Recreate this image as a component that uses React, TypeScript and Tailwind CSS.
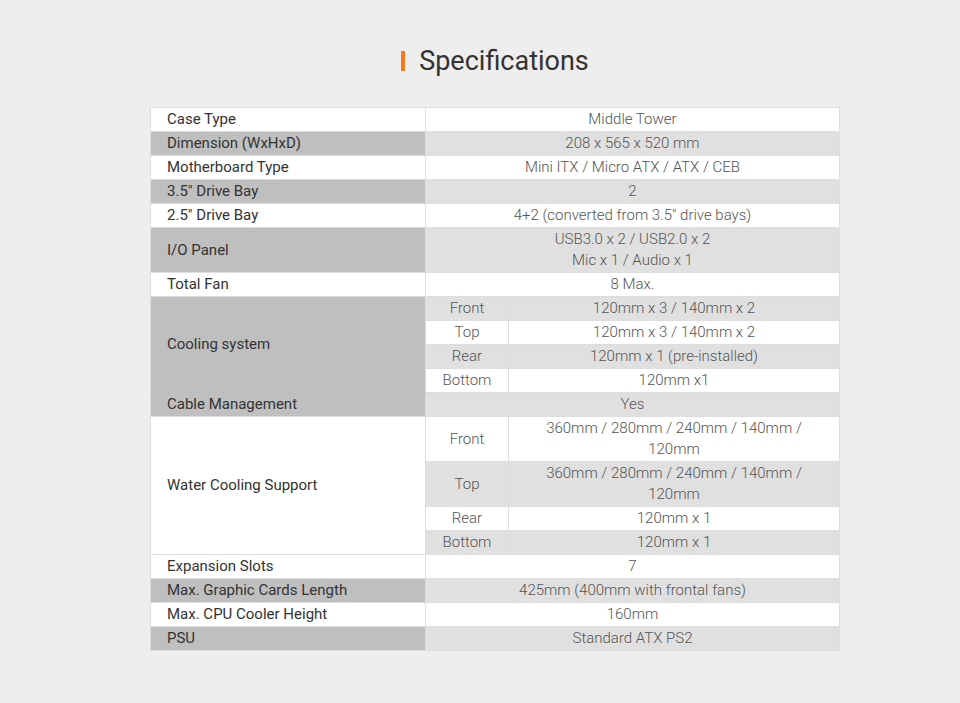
import React from 'react';

type Row = {
  label?: string;
  labelSpan?: number;
  sub?: string;
  value: string[];
  joinBelow?: boolean;
  joinAbove?: boolean;
};

const rows: Row[] = [
  { label: 'Case Type', value: ['Middle Tower'] },
  { label: 'Dimension (WxHxD)', value: ['208 x 565 x 520 mm'] },
  { label: 'Motherboard Type', value: ['Mini ITX / Micro ATX / ATX / CEB'] },
  { label: '3.5" Drive Bay', value: ['2'] },
  { label: '2.5" Drive Bay', value: ['4+2 (converted from 3.5" drive bays)'] },
  { label: 'I/O Panel', value: ['USB3.0 x 2 / USB2.0 x 2', 'Mic x 1 / Audio x 1'] },
  { label: 'Total Fan', value: ['8 Max.'] },
  { label: 'Cooling system', labelSpan: 4, sub: 'Front', value: ['120mm x 3 / 140mm x 2'], joinBelow: true },
  { sub: 'Top', value: ['120mm x 3 / 140mm x 2'] },
  { sub: 'Rear', value: ['120mm x 1 (pre-installed)'] },
  { sub: 'Bottom', value: ['120mm x1'] },
  { label: 'Cable Management', value: ['Yes'], joinAbove: true },
  { label: 'Water Cooling Support', labelSpan: 4, sub: 'Front', value: ['360mm / 280mm / 240mm / 140mm /', '120mm'] },
  { sub: 'Top', value: ['360mm / 280mm / 240mm / 140mm /', '120mm'] },
  { sub: 'Rear', value: ['120mm x 1'] },
  { sub: 'Bottom', value: ['120mm x 1'] },
  { label: 'Expansion Slots', value: ['7'] },
  { label: 'Max. Graphic Cards Length', value: ['425mm (400mm with frontal fans)'] },
  { label: 'Max. CPU Cooler Height', value: ['160mm'] },
  { label: 'PSU', value: ['Standard ATX PS2'] },
];

const App = () => {
  return (
    <div className="min-h-[703px] bg-[#eeeeee] pl-[30px] pt-[44px] font-['Roboto','Liberation_Sans',sans-serif]">
      <div className="flex flex-col items-center">
        <h2 className="flex items-center gap-[14px] text-[27px] leading-[34px] text-[#333333]">
          <span className="block w-[4px] h-[20px] bg-[#f47a20]" />
          Specifications
        </h2>
        <table className="mt-[29px] w-[690px] border-collapse border border-[#dedede] text-[15px] leading-[21px]">
          <colgroup>
            <col className="w-[275px]" />
            <col className="w-[83px]" />
            <col />
          </colgroup>
          <tbody>
            {rows.map((row, i) => {
              const even = i % 2 === 1;
              return (
                <tr key={i} className={even ? 'bg-[#e0e0e0]' : 'bg-white'}>
                  {row.label !== undefined && (
                    <td
                      rowSpan={row.labelSpan}
                      className={`border border-[#dedede] py-px pl-4 text-left text-[#333333] ${
                        even ? 'bg-[#bfbfbf]' : 'bg-white'
                      } ${row.joinBelow ? 'border-b-[#bfbfbf]' : ''} ${row.joinAbove ? 'border-t-[#bfbfbf]' : ''}`}
                    >
                      {row.label}
                    </td>
                  )}
                  {row.sub !== undefined && (
                    <td className="border border-[#dedede] py-px text-center font-light text-[#555555]">
                      {row.sub}
                    </td>
                  )}
                  <td
                    colSpan={row.sub !== undefined ? 1 : 2}
                    className="border border-[#dedede] py-px text-center font-light text-[#555555]"
                  >
                    {row.value.map((line, j) => (
                      <div key={j}>{line}</div>
                    ))}
                  </td>
                </tr>
              );
            })}
          </tbody>
        </table>
      </div>
    </div>
  );
};

export default App;
